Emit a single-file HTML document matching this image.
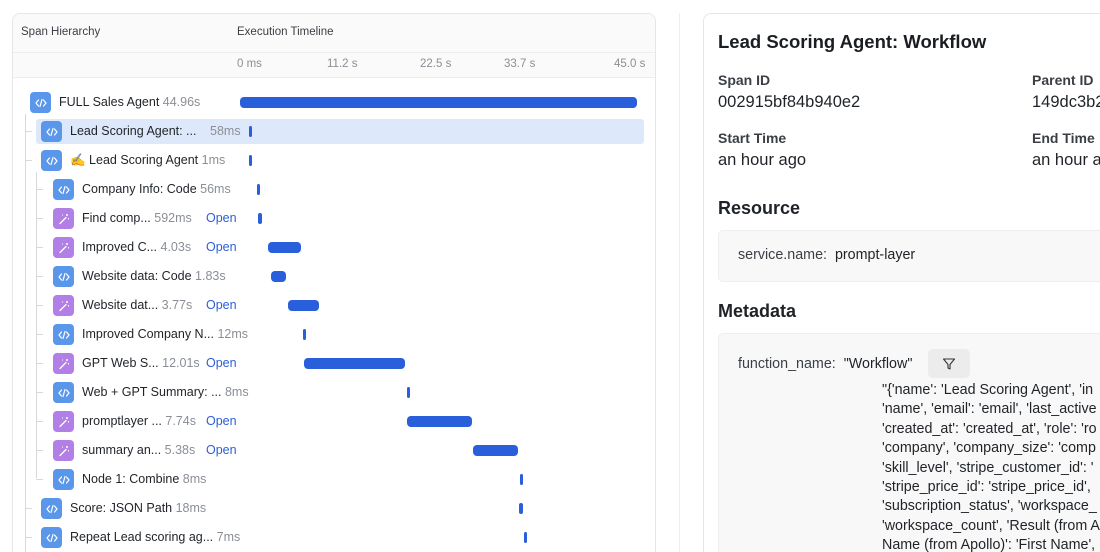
<!DOCTYPE html>
<html style="width:1100px;height:552px;overflow:hidden"><head><meta charset="utf-8"><style>
*{margin:0;padding:0;box-sizing:border-box}
body{width:1100px;height:552px;overflow:hidden;background:#fff;font-family:"Liberation Sans",sans-serif;color:#1f2328;position:relative}
.a{position:absolute;white-space:nowrap}
.panel{position:absolute;left:12px;top:13px;width:644px;height:545px;border:1px solid #e6e6e6;border-bottom:none;border-radius:8px 8px 0 0;overflow:hidden}
.ic{position:absolute;width:21px;height:21px;border-radius:4px;background:#5a97ea;display:flex;align-items:center;justify-content:center}
.ic.p{background:#b27fe6}
.nm{position:absolute;font-size:12.5px;color:#1f2328;white-space:nowrap}
.nm .d{color:#8a8f96}
.op{position:absolute;font-size:12.5px;color:#2d5fd5}
.bar{position:absolute;height:11px;background:#2a5fdc;border-radius:4px}
.vl{position:absolute;width:1px;background:#d8d8d8}
.hl{position:absolute;height:1px;width:7px;background:#d8d8d8}
.lbl{font-size:14px;color:#3b3f45;font-weight:600}
.val{font-size:16.5px;color:#1f2328}
.js{font-size:14.3px;color:#1f2328}
</style></head><body>
<div class="panel">
 <div class="a" style="left:0;top:0;width:644px;height:39px;background:#fafafa;border-bottom:1px solid #eee"></div>
 <div class="a" style="left:0;top:39px;width:644px;height:25px;background:#fafafa;border-bottom:1px solid #eee"></div>
 <div class="a" style="left:8px;top:12px;font-size:11.5px;color:#3b3f45">Span Hierarchy</div>
 <div class="a" style="left:224px;top:12px;font-size:11.5px;color:#3b3f45">Execution Timeline</div>
 <div class="a" style="left:224px;top:44px;font-size:11.5px;color:#8a8f96">0 ms</div>
 <div class="a" style="left:314px;top:44px;font-size:11.5px;color:#8a8f96">11.2 s</div>
 <div class="a" style="left:407px;top:44px;font-size:11.5px;color:#8a8f96">22.5 s</div>
 <div class="a" style="left:491px;top:44px;font-size:11.5px;color:#8a8f96">33.7 s</div>
 <div class="a" style="left:601px;top:44px;font-size:11.5px;color:#8a8f96">45.0 s</div>
</div>
<div class="a" style="left:679px;top:13px;width:1px;height:539px;background:#eee"></div>
<div class="a" style="left:36px;top:119px;width:608px;height:25px;background:#dde9fb;border-radius:3px"></div>
<div class="vl" style="left:25px;top:114px;height:438px"></div>
<div class="vl" style="left:36px;top:172px;height:306px"></div>
<div id="rows"></div>
<script>
const R=[
[0,"FULL Sales Agent","44.96s",0,240,637],
[1,"Lead Scoring Agent: ...","58ms",0,249,252,210],
[1,"✍️ Lead Scoring Agent","1ms",0,249,252],
[2,"Company Info: Code","56ms",0,257,260],
[2,"Find comp...","592ms",1,258,262],
[2,"Improved C...","4.03s",1,268,301],
[2,"Website data: Code","1.83s",0,271,286],
[2,"Website dat...","3.77s",1,288,319],
[2,"Improved Company N...","12ms",0,303,306],
[2,"GPT Web S...","12.01s",1,304,405],
[2,"Web + GPT Summary: ...","8ms",0,407,410],
[2,"promptlayer ...","7.74s",1,407,472],
[2,"summary an...","5.38s",1,473,518],
[2,"Node 1: Combine","8ms",0,520,523],
[1,"Score: JSON Path","18ms",0,519,523],
[1,"Repeat Lead scoring ag...","7ms",0,524,527]];
const code='<svg width="12" height="10" viewBox="0 0 12 10"><path d="M3.5 2L1 5l2.5 3M8.5 2L11 5l-2.5 3M7 1.5L5 8.5" stroke="#fff" stroke-width="1.2" fill="none" stroke-linecap="round"/></svg>';
const wand='<svg width="12" height="12" viewBox="0 0 12 12"><path d="M2 10.5L8 4.5" stroke="#fff" stroke-width="1.3" stroke-linecap="round"/><path d="M9 1v2M8 2h2M10.5 5v1.5M4.5 1.5v1" stroke="#fff" stroke-width="1"/></svg>';
let h='';
R.forEach((r,i)=>{const cy=102+i*29;const ix=[30,41,53][r[0]];
 if(r[0]>0){h+=`<div class="hl" style="left:${r[0]==1?25:36}px;top:${cy}px"></div>`}
 h+=`<div class="ic ${r[3]?'p':''}" style="left:${ix}px;top:${cy-10}px">${r[3]?wand:code}</div>`;
 h+=`<div class="nm" style="left:${ix+29}px;top:${cy-7}px">${r[1]}${r[6]?'':' '}<span class="d" ${r[6]?`style="position:absolute;left:${r[6]-ix-29}px"`:''}>${r[2]}</span></div>`;
 if(r[3])h+=`<div class="op" style="left:206px;top:${cy-7}px">Open</div>`;
 h+=`<div class="bar" style="left:${r[4]}px;width:${r[5]-r[4]}px;top:${cy-5}px"></div>`;});
document.getElementById('rows').innerHTML=h;
</script>
<div class="a" style="left:703px;top:13px;width:420px;height:545px;border:1px solid #e6e6e6;border-bottom:none;border-radius:8px 0 0 0"></div>
<div class="a" style="left:718px;top:31px;font-size:18.5px;font-weight:700;color:#1a1d21">Lead Scoring Agent: Workflow</div>
<div class="a lbl" style="left:718px;top:72px">Span ID</div>
<div class="a val" style="left:718px;top:93px">002915bf84b940e2</div>
<div class="a lbl" style="left:1032px;top:72px">Parent ID</div>
<div class="a val" style="left:1032px;top:93px">149dc3b2</div>
<div class="a lbl" style="left:718px;top:130px">Start Time</div>
<div class="a val" style="left:718px;top:151px">an hour ago</div>
<div class="a lbl" style="left:1032px;top:130px">End Time</div>
<div class="a val" style="left:1032px;top:151px">an hour a</div>
<div class="a" style="left:718px;top:198px;font-size:18px;font-weight:600">Resource</div>
<div class="a" style="left:718px;top:230px;width:400px;height:52px;background:#f8f8f8;border:1px solid #eee;border-radius:5px"></div>
<div class="a js" style="left:738px;top:247px;color:#3b3f45">service.name:&nbsp; <span style="color:#1f2328">prompt-layer</span></div>
<div class="a" style="left:718px;top:301px;font-size:18px;font-weight:600">Metadata</div>
<div class="a" style="left:718px;top:333px;width:400px;height:230px;background:#f8f8f8;border:1px solid #eee;border-radius:5px"></div>
<div class="a js" style="left:738px;top:356px;color:#3b3f45">function_name:&nbsp; <span style="color:#1f2328">"Workflow"</span></div>
<div class="a" style="left:928px;top:349px;width:42px;height:29px;background:#ececec;border-radius:5px;display:flex;align-items:center;justify-content:center"><svg width="14" height="14" viewBox="0 0 14 14"><path d="M1.5 2h11L8 7.5V12L6 11V7.5z" fill="none" stroke="#333" stroke-width="1.1" stroke-linejoin="round"/></svg></div>
<div class="a js" style="left:882px;top:381px;line-height:19.4px">"{'name': 'Lead Scoring Agent', 'in<br>'name', 'email': 'email', 'last_active<br>'created_at': 'created_at', 'role': 'ro<br>'company', 'company_size': 'comp<br>'skill_level', 'stripe_customer_id': '<br>'stripe_price_id': 'stripe_price_id',<br>'subscription_status', 'workspace_<br>'workspace_count', 'Result (from A<br>Name (from Apollo)': 'First Name',</div>
</body></html>
